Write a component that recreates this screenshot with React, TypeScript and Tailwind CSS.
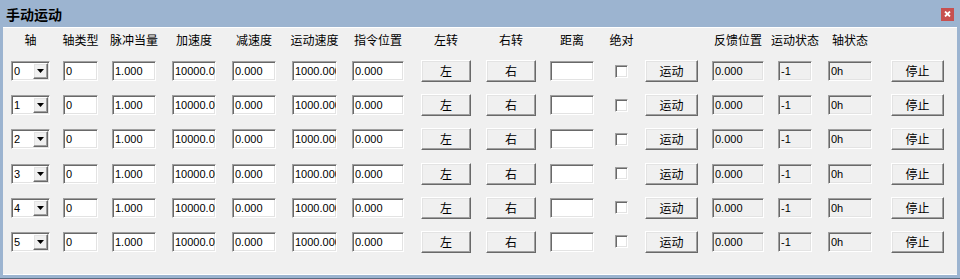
import React from 'react';

const cjk = "font-['Noto_Sans_CJK_SC','Noto_Sans',sans-serif]";
const num = "font-['Liberation_Sans','Noto_Sans_CJK_SC',sans-serif]";

const sunken =
  'border border-t-[#a0a0a0] border-l-[#a0a0a0] border-b-white border-r-white shadow-[inset_1px_1px_0_#696969,inset_-1px_-1px_0_#e3e3e3]';
const raised =
  'border border-t-white border-l-white border-b-[#696969] border-r-[#696969] shadow-[inset_-1px_-1px_0_#a0a0a0,inset_1px_1px_0_#e3e3e3] bg-[#f0f0f0]';

// column slots: margin from previous column + width
const cols = [
  { pos: 'ml-[8px] w-[39px]', label: '轴' },
  { pos: 'ml-[13px] w-[35px]', label: '轴类型' },
  { pos: 'ml-[14px] w-[44px]', label: '脉冲当量' },
  { pos: 'ml-[16px] w-[44px]', label: '加速度' },
  { pos: 'ml-[16px] w-[44px]', label: '减速度' },
  { pos: 'ml-[16px] w-[45px]', label: '运动速度' },
  { pos: 'ml-[15px] w-[52px]', label: '指令位置' },
  { pos: 'ml-[17px] w-[50px]', label: '左转' },
  { pos: 'ml-[15px] w-[50px]', label: '右转' },
  { pos: 'ml-[14px] w-[44px]', label: '距离' },
  { pos: 'ml-[21px] w-[13px]', label: '绝对' },
  { pos: 'ml-[17px] w-[53px]', label: '' },
  { pos: 'ml-[14px] w-[52px]', label: '反馈位置' },
  { pos: 'ml-[14px] w-[34px]', label: '运动状态' },
  { pos: 'ml-[16px] w-[44px]', label: '轴状态' },
  { pos: 'ml-[19px] w-[53px]', label: '' },
];

function Field({ pos, value, readOnly }: { pos: string; value: string; readOnly?: boolean }) {
  return (
    <div
      className={`${pos} h-[20px] shrink-0 ${sunken} ${readOnly ? 'bg-[#f0f0f0]' : 'bg-white'} pl-[2px] overflow-hidden whitespace-nowrap text-[11px] leading-[18px] text-black ${num}`}
    >
      {value}
    </div>
  );
}

function Btn({ pos, label }: { pos: string; label: string }) {
  return (
    <div
      className={`${pos} h-[22px] shrink-0 ${raised} flex items-center justify-center text-[12px] text-black ${cjk}`}
    >
      {label}
    </div>
  );
}

function Combo({ pos, value }: { pos: string; value: string }) {
  return (
    <div className={`${pos} h-[20px] shrink-0 ${sunken} bg-white flex items-center`}>
      <span className={`flex-1 pl-[2px] text-[11px] leading-[18px] ${num}`}>{value}</span>
      <div className={`w-[15px] h-[16px] mr-[1px] ${raised} flex items-center justify-center`}>
        <svg width="7" height="4" viewBox="0 0 7 4">
          <path d="M0 0h7L3.5 4z" fill="#000" />
        </svg>
      </div>
    </div>
  );
}

function AxisRow({ i }: { i: number }) {
  return (
    <div className="flex items-center h-[22px]">
      <Combo pos={cols[0].pos} value={String(i)} />
      <Field pos={cols[1].pos} value="0" />
      <Field pos={cols[2].pos} value="1.000" />
      <Field pos={cols[3].pos} value="10000.000" />
      <Field pos={cols[4].pos} value="0.000" />
      <Field pos={cols[5].pos} value="1000.000" />
      <Field pos={cols[6].pos} value="0.000" />
      <Btn pos={cols[7].pos} label="左" />
      <Btn pos={cols[8].pos} label="右" />
      <Field pos={cols[9].pos} value="" />
      <div className={`${cols[10].pos} flex items-center`}>
        <div className={`w-[13px] h-[13px] ${sunken} bg-white`} />
      </div>
      <Btn pos={cols[11].pos} label="运动" />
      <Field pos={cols[12].pos} value="0.000" readOnly />
      <Field pos={cols[13].pos} value="-1" readOnly />
      <Field pos={cols[14].pos} value="0h" readOnly />
      <Btn pos={cols[15].pos} label="停止" />
    </div>
  );
}

export default function App() {
  return (
    <div className="w-[960px] h-[279px] bg-[#9cb4d0] border-b border-[#5b6b80] flex flex-col">
      {/* title bar */}
      <div className="h-[27px] shrink-0 flex items-center justify-between pl-[6px] pr-[6px]">
        <span className={`text-[14px] font-bold text-black leading-none ${cjk}`}>手动运动</span>
        <div className="w-[13px] h-[13px] bg-[#c75050] flex items-center justify-center mt-[1px]">
          <svg width="7" height="6" viewBox="0 0 7 6">
            <path d="M1 0.5L6 5.5M6 0.5L1 5.5" stroke="#fff" strokeWidth="1.8" />
          </svg>
        </div>
      </div>

      {/* body */}
      <div className="flex-1 mx-[3px] mb-[3px] bg-[#f0f0f0] border-t border-b border-white pt-[5px]">
        <div className="flex h-[14px] items-center">
          {cols.map((c, k) => (
            <div key={k} className={`${c.pos} shrink-0 flex justify-center`}>
              <span className={`whitespace-nowrap text-[12px] leading-[14px] text-black ${cjk}`}>{c.label}</span>
            </div>
          ))}
        </div>
        <div className="mt-[13px] flex flex-col gap-[12.2px]">
          {[0, 1, 2, 3, 4, 5].map((i) => (
            <AxisRow key={i} i={i} />
          ))}
        </div>
      </div>
    </div>
  );
}
